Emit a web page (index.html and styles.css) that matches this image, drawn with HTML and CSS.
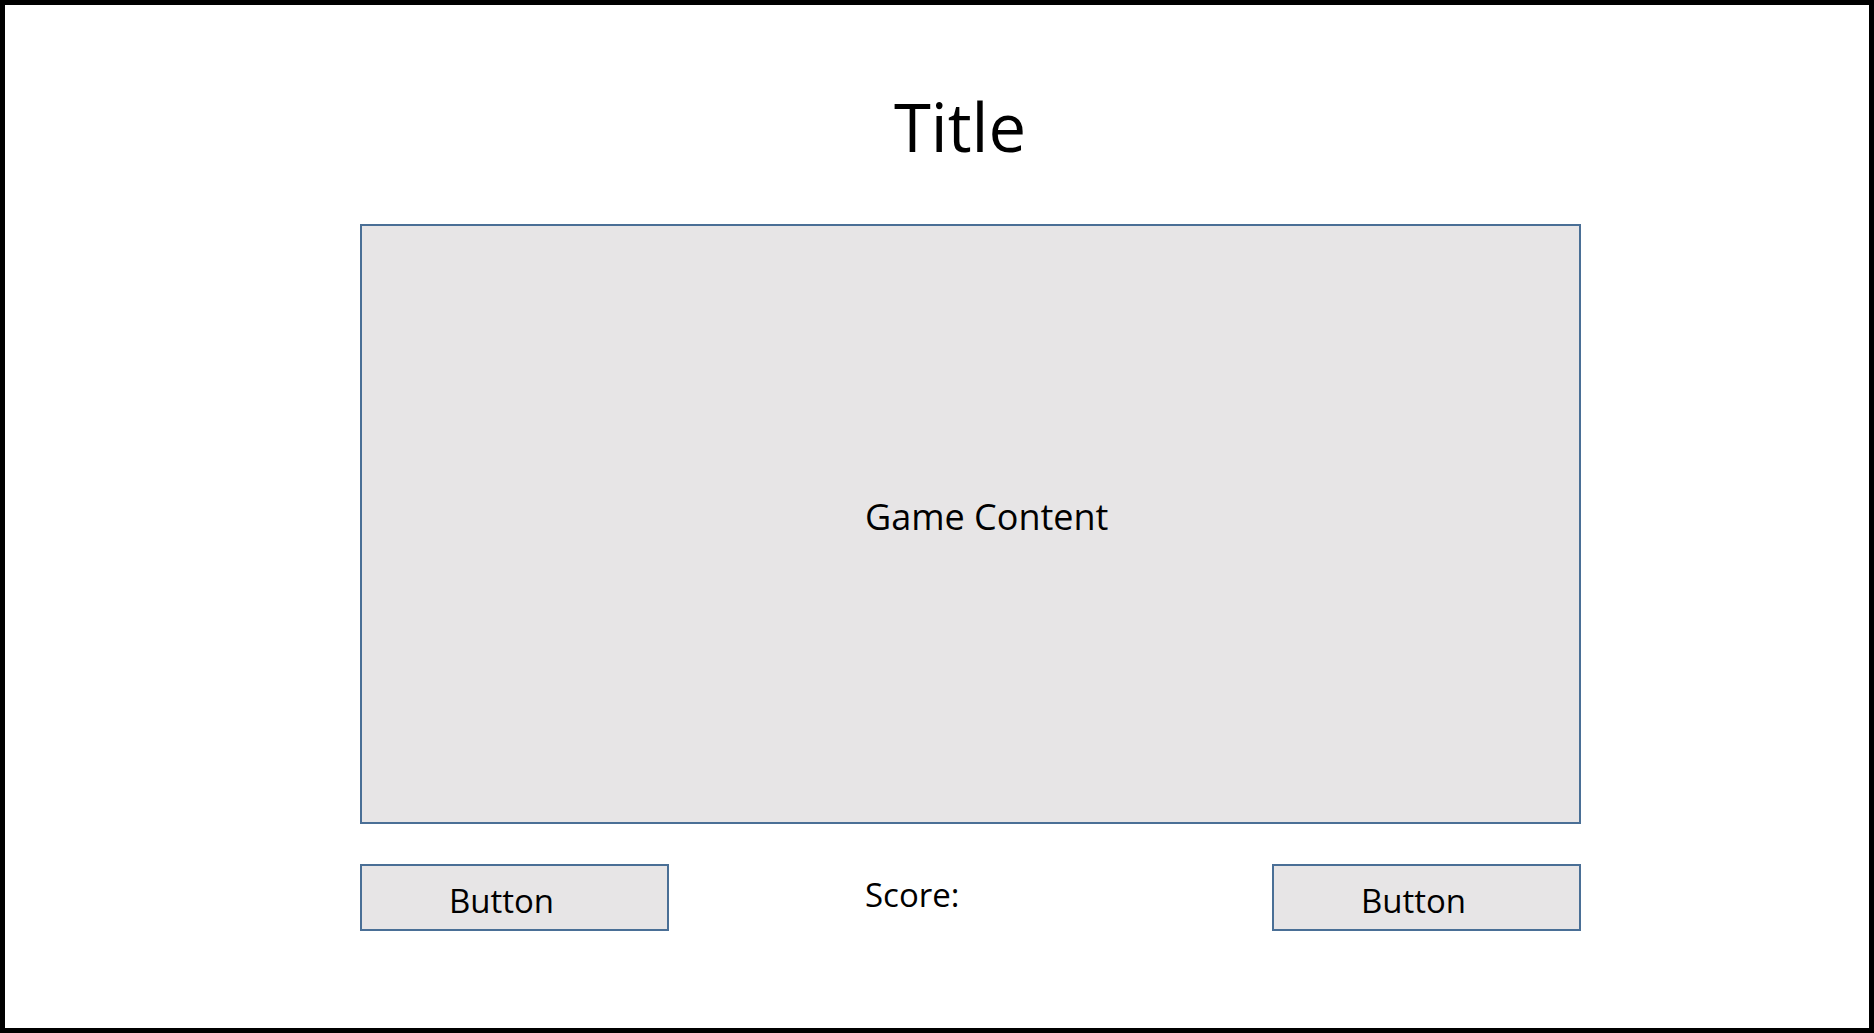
FILE: index.html
```html
<!DOCTYPE html>
<html>
<head>
<meta charset="utf-8">
<link rel="stylesheet" href="styles.css">
</head>
<body>
<div class="frame">
  <div class="stage">
    <h1 class="title">Title</h1>
    <div class="game">
      <span class="game-label">Game Content</span>
    </div>
    <div class="controls">
      <div class="btn"><span>Button</span></div>
      <div class="score">Score:</div>
      <div class="btn"><span>Button</span></div>
    </div>
  </div>
</div>
</body>
</html>
```

FILE: styles.css
```css
html, body {
  margin: 0;
  padding: 0;
  background: #ffffff;
}
.frame {
  box-sizing: border-box;
  width: 1874px;
  height: 1033px;
  border: 5px solid #000000;
  font-family: "Open Sans", "Noto Sans", sans-serif;
  color: #000000;
}
.stage {
  width: 1221px;
  margin-left: 355px;
  display: flex;
  flex-direction: column;
}
.title {
  margin: 0;
  height: 219px;
  box-sizing: border-box;
  padding-top: 88px;
  padding-right: 21px;
  font-size: 67px;
  font-weight: 400;
  line-height: 1;
  text-align: center;
}
.game {
  box-sizing: border-box;
  height: 600px;
  border: 2px solid #4a6f96;
  background: #e7e5e6;
  display: flex;
  align-items: center;
  padding-left: 503px;
  padding-bottom: 14px;
}
.game-label {
  font-size: 36px;
  line-height: 1;
}
.controls {
  margin-top: 40px;
  display: grid;
  grid-template-columns: 309px 1fr 309px;
  height: 67px;
}
.btn {
  box-sizing: border-box;
  border: 2px solid #4a6f96;
  background: #e7e5e6;
  display: flex;
  align-items: center;
  justify-content: center;
  padding-right: 26px;
  padding-top: 5px;
  font-size: 33px;
  line-height: 1;
}
.score {
  padding-left: 196px;
  padding-top: 14px;
  font-size: 33px;
  line-height: 1;
}
```
